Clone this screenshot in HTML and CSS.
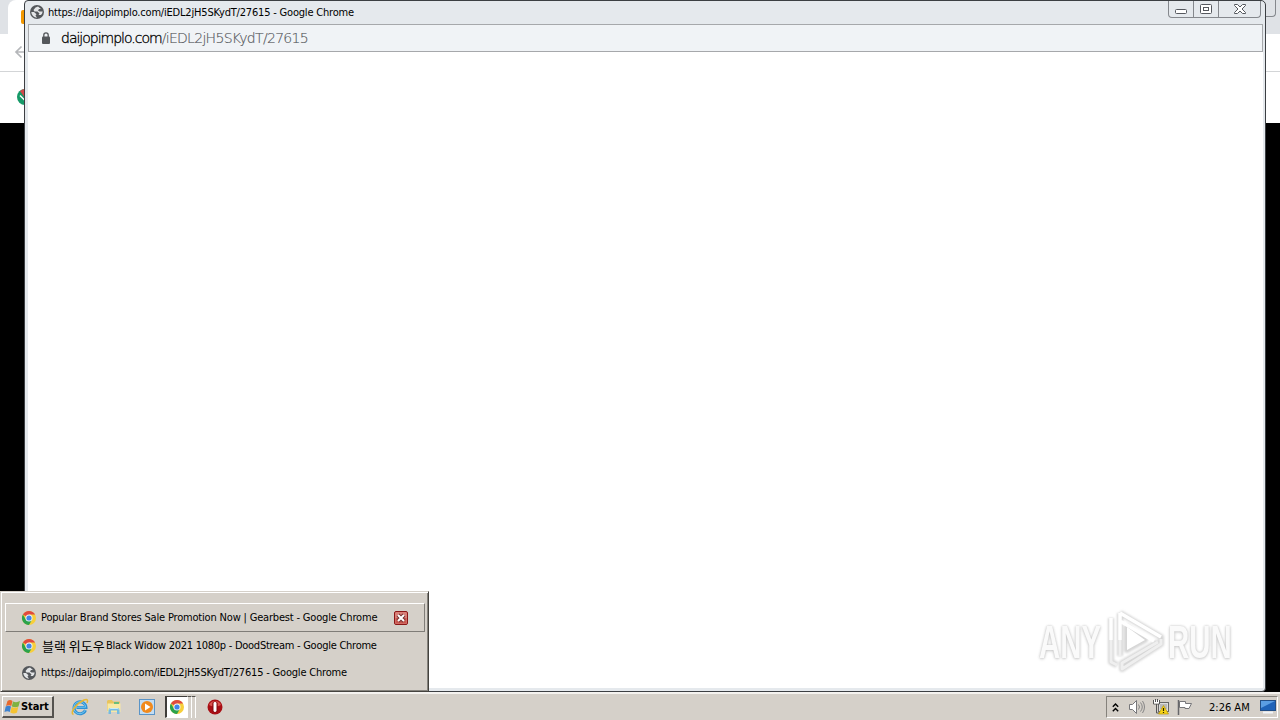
FILE: index.html
```html
<!DOCTYPE html>
<html lang="en">
<head>
  <meta charset="UTF-8" />
  <title>Desktop</title>
  <link rel="stylesheet" href="styles.css">
</head>
<body>
  <!-- shared icons -->
  <svg class="defs" width="0" height="0">
    <symbol id="chrome" viewBox="0 0 16 16">
      <circle cx="8" cy="8" r="7" fill="#f7cf3a"/>
      <path d="M8 8L1.9 4.5A7 7 0 0 1 14.1 4.5H8z" fill="#e04a3f"/>
      <path d="M1.9 4.5A7 7 0 0 0 8 15L11 9.8L8 8L5 9.8z" fill="#2ba24c"/>
      <circle cx="8" cy="8" r="3.5" fill="#f4f4f4"/>
      <circle cx="8" cy="8" r="2.6" fill="#4285e8"/>
    </symbol>
    <symbol id="globe" viewBox="0 0 16 16">
      <circle cx="8" cy="8" r="7" fill="#54575b"/>
      <path d="M9 2.500L6.500 3.500L4.500 6L5.500 7.500H8.500L10.500 9.500L9.500 11H12A6 6 0 0 0 13.700 7.500H10.500L9 6.500L10 5H12z" fill="#e3e5e7"/>
      <path d="M2.300 8H5L7.500 10.200L6.500 11.500L8 13.700A5.800 5.800 0 0 1 2.300 8z" fill="#e3e5e7"/>
    </symbol>
  </svg>

  <div class="screen">
    <div class="back-browser">
      <div class="back-tabs">
        <div class="back-tab"><span class="favicon"></span></div>
        <div class="back-close"></div>
      </div>
      <div class="back-toolbar">
        <svg width="14" height="14" viewBox="0 0 14 14" fill="none" stroke="#b5b7ba" stroke-width="1.7"><path d="M14 7H2M7.5 1.5L2 7l5.500 5.500"/></svg>
      </div>
      <div class="back-bookmarks">
        <svg width="16" height="16" viewBox="0 0 16 16"><circle cx="8" cy="8" r="8" fill="#169a68"/><path d="M3 2a8 8 0 0 1 10 0L8 9z" fill="#d6484a"/><path d="M3 6.500l5 5 5-5" fill="none" stroke="#fff" stroke-width="1.500"/></svg>
      </div>
    </div>

    <div class="window">
      <div class="titlebar">
        <svg width="16" height="16"><use href="#globe"/></svg>
        <span class="title">https://daijopimplo.com/iEDL2jH5SKydT/27615 - Google Chrome</span>
        <div class="controls">
          <span class="min"><svg width="12" height="5"><rect x=".5" y=".5" width="11" height="4" rx="1" fill="#fff" stroke="#55585e"/></svg></span>
          <span class="max"><svg width="12" height="10" fill="#fff" stroke="#55585e"><rect x=".5" y=".5" width="11" height="9" rx="1"/><rect x="3.500" y="3.500" width="5" height="3"/></svg></span>
          <span class="close"><svg width="12" height="10" viewBox="0 0 12 10"><path d="M.5.5h3L6 3 8.500.5h3v1L8 5l3.500 3.500v1h-3L6 7 3.500 9.500h-3v-1L4 5 .5 1.500z" fill="#fff" stroke="#55585e"/></svg></span>
        </div>
      </div>
      <div class="addressbar">
        <svg width="8" height="12" viewBox="0 0 8 12"><rect y="4.500" width="8" height="7.500" rx="1" fill="#54575b"/><path d="M1.800 5V3a2.200 2.200 0 0 1 4.400 0v2" fill="none" stroke="#54575b" stroke-width="1.300"/></svg>
        <span class="url"><span class="host">daijopimplo.com</span><span class="path">/iEDL2jH5SKydT/27615</span></span>
      </div>
      <div class="page"></div>
    </div>

    <div class="watermark">
      <span class="any">ANY</span>
      <svg width="58" height="64" viewBox="0 0 58 64" fill="none" stroke-linejoin="round">
        <g class="halo"><path d="M4 9v44l6 3M13 4v43M13 4l41 24v7L15 60v-6l36-21M20 18v23l18-10z"/></g>
        <path d="M4 9v22M13 4v27M13 4l41 24M13 12l34 20" stroke="#fff" stroke-width="3.500"/>
        <path d="M4 31v22l6 3M13 31v16M54 30v5L15 60v-6l36-21" stroke="#efefef" stroke-width="3"/>
        <path d="M20 18v23l18-10z" fill="#fff"/>
      </svg>
      <span class="run">RUN</span>
    </div>

    <div class="group-menu">
      <div class="item active">
        <svg width="16" height="16"><use href="#chrome"/></svg>
        <span class="t1">Popular Brand Stores Sale Promotion Now | Gearbest - Google Chrome</span>
        <svg class="item-close" width="14" height="14" viewBox="0 0 14 14"><rect x=".5" y=".5" width="13" height="13" rx="1.500" fill="#d98078" stroke="#8b1717"/><path d="M1.500 7h11v5.500h-11z" fill="#c8574f"/><path d="M4 4l6 6M10 4l-6 6" stroke="#763030" stroke-width="4"/><path d="M4 4l6 6M10 4l-6 6" stroke="#fff" stroke-width="2"/></svg>
      </div>
      <div class="item">
        <svg width="16" height="16"><use href="#chrome"/></svg>
        <span class="t2"><span class="ko">블랙 위도우</span> <span class="en">Black Widow 2021 1080p - DoodStream - Google Chrome</span></span>
      </div>
      <div class="item">
        <svg width="16" height="16"><use href="#globe"/></svg>
        <span class="title">https://daijopimplo.com/iEDL2jH5SKydT/27615 - Google Chrome</span>
      </div>
    </div>
  </div>

  <div class="taskbar">
    <div class="start">
      <svg width="17" height="16" viewBox="0 0 17 16"><path d="M3.500 2Q6 0 8.500 2L7.300 7Q5 5.500 2 7z" fill="#e8692c"/><path d="M9 2.500Q12.500 4 16 2L14.500 7.500Q11.500 9 7.800 7.500z" fill="#7fb241"/><path d="M1.700 7.500Q4.500 6 7 7.500L5.800 13Q3.500 11.500.5 13z" fill="#3d82cf"/><path d="M7.600 8Q11 9.500 14.200 8L13 13.500Q10 15.500 6.300 13.500z" fill="#f5c332"/></svg>
      <span>Start</span>
    </div>
    <div class="quick">
      <svg width="18" height="18" viewBox="0 0 18 18" fill="none"><path d="M14.500 12.200A6 6 0 1 1 15 9.500H5.500" stroke="#2f91d4" stroke-width="3"/><path d="M14.300 12A6 6 0 1 1 14.700 9.200H6" stroke="#73c8f1" stroke-width="1"/><path d="M2.500 16.500C-2 15 6 5 13 2c3.500-1.300 4.300.3 3 3" stroke="#e8b832" stroke-width="1.500"/></svg>
      <svg width="16" height="16" viewBox="0 0 16 16"><path d="M1 2l1-1h4l1 1.500h7V12H1z" fill="#e9c45c"/><path d="M1.500 4.500h13V13h-13z" fill="#f8e9a4"/><path d="M8 3h5v2H8z" fill="#6bbd7b"/><path d="M2.500 15v-4q0-2 2-2h7q2 0 2 2v4h-2.500v-3.500H5V15z" fill="#76bbe1"/><path d="M3 10.500q.5-1 2-1h6q1.500 0 2 1" fill="none" stroke="#c9ebfa"/></svg>
      <svg width="16" height="16" viewBox="0 0 16 16"><rect x=".5" y=".5" width="15" height="15" fill="#c3ddf3" stroke="#5a94c7"/><circle cx="8" cy="8" r="6" fill="#f18a1d"/><path d="M6 4.500v7L11.500 8z" fill="#fff"/></svg>
    </div>
    <div class="stack"><div class="task"><svg width="16" height="16"><use href="#chrome"/></svg></div><i></i><i></i></div>
    <svg class="opera" width="16" height="16" viewBox="0 0 16 16"><circle cx="8" cy="8" r="7.500" fill="#a90e14"/><path d="M2 6a6.500 6.500 0 0 1 12 0q-6 3-12 0z" fill="#d9544f"/><rect x="5.300" y="2.500" width="5.400" height="11" rx="2.500" fill="#860b10"/><rect x="6.500" y="3" width="3" height="10" rx="1.400" fill="#fff"/></svg>
    <div class="tray">
      <svg class="chev" width="7" height="9" viewBox="0 0 7 9" fill="none" stroke="#000" stroke-width="1.400"><path d="M.8 3.700l2.700-2.700 2.700 2.700M.8 8.200l2.700-2.700 2.700 2.700"/></svg>
      <svg class="vol" width="16" height="14" viewBox="0 0 16 14" fill="none" stroke="#77777a"><path d="M.5 4.500h3l4-4v13l-4-4h-3z" fill="#fff"/><path d="M9.500 4.500q2 2.500 0 5M11.500 2.500q3.500 4.500 0 9M13.500 1q4 6 0 12" stroke="#858585"/></svg>
      <svg class="net" width="16" height="16" viewBox="0 0 16 16"><rect x="5.500" y="3.500" width="10" height="9" fill="#ddd" stroke="#666"/><path d="M7 5h7v5H7z" fill="#b9b9b9"/><path d="M.5 1v4h6V1M3.500 5v9h4" fill="none" stroke="#555"/><path d="M1 1h5v3.500H1z" fill="#fff"/><path d="M2.500 0v3M4.500 0v3" stroke="#555"/><path d="M10.500 6.500l5 8.500h-10z" fill="#f7d417" stroke="#b89405" stroke-width=".7"/><path d="M10.500 9v3M10.500 13v1" stroke="#282100" stroke-width="1.200"/></svg>
      <svg class="flag" width="16" height="15" viewBox="0 0 16 15"><path d="M2.500 1.500h6v2h6l-2.500 5H8v-1H2.500z" fill="#fff" stroke="#77777a"/><path d="M1.500 0v15" stroke="#66666a" stroke-width="1.500"/></svg>
      <span class="clock">2:26 AM</span>
      <svg class="desk" width="16" height="14" viewBox="0 0 16 14"><rect x=".5" y=".5" width="15" height="10" fill="#1f63b8" stroke="#234f86"/><path d="M1 1h14L1 8z" fill="#5b9ee3"/><path d="M3 12.500h10" stroke="#f0f4f8" stroke-width="2"/></svg>
    </div>
  </div>
</body>
</html>
```
FILE: styles.css
```css
* {
  box-sizing: border-box;
}
body {
  margin: 0;
  width: 1280px;
  height: 720px;
  overflow: hidden;
  display: flex;
  flex-direction: column;
  background: #000;
  color: #000;
  font-family: "DejaVu Sans Condensed", "DejaVu Sans", sans-serif;
  font-stretch: condensed;
  font-size: 11px;
  white-space: nowrap;
}
svg {
  display: block;
  flex: none;
}
.defs {
  position: absolute;
}
.screen {
  position: relative;
  height: 692px;
  flex: none;
}

/* browser behind */
.back-tabs {
  height: 34px;
  background: #dfe2e6;
  display: flex;
  justify-content: space-between;
}
.back-tab {
  width: 200px;
  margin-left: 8px;
  padding: 10px 13px;
  background: #fff;
  border-radius: 8px 8px 0 0;
}
.favicon {
  display: block;
  width: 16px;
  height: 14px;
  background: #f39800;
  border-radius: 2px;
}
.back-close {
  width: 40px;
  height: 17px;
  margin-right: 4px;
  border: 1px solid #85888d;
  border-top: 0;
  border-radius: 0 0 4px 4px;
}
.back-toolbar {
  height: 38px;
  padding: 11px 14px;
  background: #fff;
  border-bottom: 1px solid #d3d5d7;
}
.back-bookmarks {
  height: 51px;
  padding: 17px;
  background: #fff;
}

/* popup window */
.window {
  position: absolute;
  left: 24px;
  top: 0;
  width: 1242px;
  height: 692px;
  display: flex;
  flex-direction: column;
  padding: 0 2px 3px 3px;
  background: #e5e9ed;
  border: 1px solid #3c3f43;
  border-radius: 4px 5px 4px 0;
}
.titlebar {
  height: 23px;
  display: flex;
  align-items: flex-start;
}
.titlebar > svg {
  margin: 3px 3px 0 1px;
}
.titlebar .title {
  margin-top: 5px;
}
.title {
  line-height: 14px;
  letter-spacing: -0.19px;
}
.controls {
  display: flex;
  height: 17px;
  margin: 0 2px 0 auto;
  border: 1px solid #85888d;
  border-top: 0;
  border-radius: 0 0 4px 4px;
}
.controls span {
  display: flex;
  justify-content: center;
  align-items: center;
  width: 25px;
  border-right: 1px solid #85888d;
}
.controls .min {
  padding-top: 5px;
}
.controls .close {
  width: 41px;
  border-right: 0;
}
.addressbar {
  height: 28px;
  display: flex;
  align-items: center;
  padding: 0 0 1px 13px;
  background: #f0f3f6;
  border: 1px solid #a6a8ab;
}
.url {
  margin-left: 11px;
  font-size: 14px;
  font-weight: 200;
  font-family: "DejaVu Sans", sans-serif;
  font-stretch: normal;
}
.host {
  letter-spacing: -1px;
  -webkit-text-stroke: 0.3px #000;
}
.path {
  letter-spacing: -0.7px;
  color: #55585c;
  -webkit-text-stroke: 0.15px #55585c;
}
.page {
  flex: 1;
  background: #fff;
}

.watermark {
  position: absolute;
  left: 1039px;
  top: 608px;
  display: flex;
  align-items: center;
  font: bold 46px/64px "Liberation Sans Narrow", "Liberation Sans", sans-serif;
}
.watermark span {
  width: 64px;
  transform: scaleX(0.64);
  transform-origin: 0 0;
  padding-top: 2px;
  color: #fafafa;
  text-shadow: 0 0 3px #c4c4c4, 0 1px 4px #d0d0d0;
}
.watermark svg {
  margin: 0 3px 0 4px;
  overflow: visible;
}
.halo {
  stroke: #d6d6d6;
  stroke-width: 6;
  filter: blur(1.2px);
}

/* grouped taskbar windows */
.group-menu {
  position: absolute;
  left: 0;
  bottom: 0;
  width: 429px;
  height: 101px;
  padding: 11px 3px 0 4px;
  background: #d5d0c9;
  border: 1px solid #d5d0c9;
  border-right-color: #44423e;
  border-bottom-color: #44423e;
  box-shadow: inset 1px 1px #fff, inset -1px -1px #85827c;
}
.item {
  display: flex;
  align-items: center;
  width: 420px;
  height: 27px;
  padding-left: 16px;
}
.item.active {
  height: 29px;
  padding-left: 15px;
  border: 1px solid #807d78;
  border-top-color: #fff;
  border-left-color: #fff;
}
.item > span {
  margin-left: 4px;
}
.t1 {
  letter-spacing: -0.18px;
}
.item-close {
  margin-left: auto;
  margin-right: 16px;
}
.t2 {
  display: flex;
  align-items: center;
  letter-spacing: -0.26px;
}
.ko {
  width: 65px;
  padding-left: 1px;
  font: 13px/16px "Noto Sans CJK KR", sans-serif;
  letter-spacing: 0;
}

/* taskbar */
.taskbar {
  height: 28px;
  display: flex;
  align-items: center;
  padding: 2px 2px 0;
  background: #d5d0c9;
  box-shadow: inset 0 2px #f4f2ef;
}
.start {
  width: 52px;
  height: 22px;
  display: flex;
  align-items: center;
  padding-left: 1px;
  border: 1px solid #fff;
  border-right: 2px solid #55534f;
  border-bottom: 2px solid #55534f;
  font-weight: bold;
}
.start span {
  letter-spacing: -0.1px;
}
.quick {
  display: flex;
  align-items: center;
  gap: 17px;
  margin-left: 17px;
}
.stack {
  display: flex;
  height: 22px;
  margin-left: 10px;
}
.task {
  width: 23px;
  padding: 2px;
  background: #fff;
  border: 1px solid #fff;
  border-top-color: #3f3d3a;
  border-left: 2px solid #3f3d3a;
}
.stack i {
  width: 4px;
  border-top: 1px solid #55534f;
  border-right: 1px solid #fff;
  background: #d5d0c9;
}
.opera {
  margin-left: 11px;
}
.tray {
  width: 172px;
  height: 22px;
  margin-left: auto;
  display: flex;
  align-items: center;
  padding-left: 5px;
  border: 1px solid #fff;
  border-top-color: #85827c;
  border-left-color: #85827c;
}
.vol {
  margin-left: 10px;
}
.net {
  margin-left: 8px;
}
.flag {
  margin-left: 8px;
}
.clock {
  width: 41px;
  margin-left: 16px;
}
.desk {
  margin-left: 10px;
}
```
